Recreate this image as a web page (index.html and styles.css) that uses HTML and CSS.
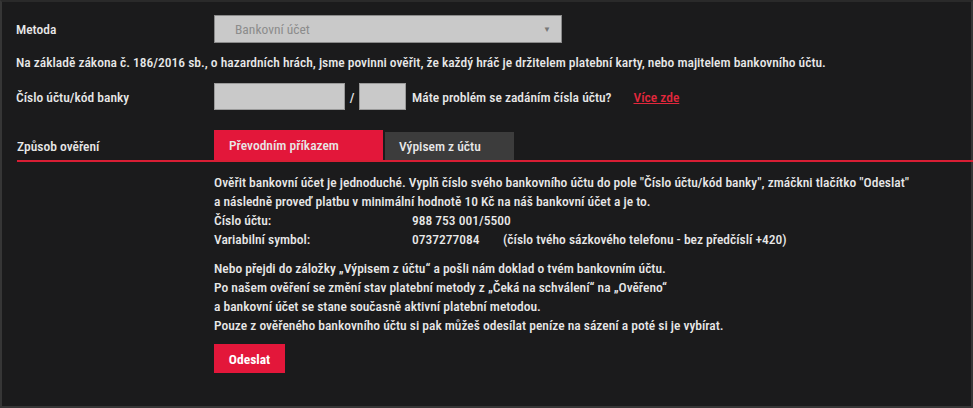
FILE: index.html
```html
<!DOCTYPE html>
<html lang="cs">

<head>
    <meta charset="UTF-8">
    <meta name="viewport" content="width=device-width, initial-scale=1.0">
    <title>Platební metoda</title>
    <link rel="stylesheet" href="styles.css">
</head>

<body>
    <div class="panel">

        <div class="row row-method">
            <label class="label" for="method">Metoda</label>
            <div class="select">
                <span>Bankovní účet</span>
                <span class="arrow">&#9660;</span>
            </div>
        </div>

        <p class="law">Na základě zákona č. 186/2016 sb., o hazardních hrách, jsme povinni ověřit, že každý hráč je držitelem platební karty, nebo majitelem bankovního účtu.</p>

        <div class="row row-account">
            <label class="label" for="account">Číslo účtu/kód banky</label>
            <input type="text" id="account" class="input input-account">
            <span class="slash">/</span>
            <input type="text" id="bank" class="input input-bank">
            <span class="help">Máte problém se zadáním čísla účtu?</span>
            <a href="#" class="more">Více zde</a>
        </div>

        <div class="tabs-row">
            <span class="label">Způsob ověření</span>
            <div class="tab active">Převodním příkazem</div>
            <div class="tab">Výpisem z účtu</div>
        </div>

        <div class="content">
            <p>Ověřit bankovní účet je jednoduché. Vyplň číslo svého bankovního účtu do pole "Číslo účtu/kód banky", zmáčkni tlačítko "Odeslat"<br>
                a následně proveď platbu v minimální hodnotě 10 Kč na náš bankovní účet a je to.</p>
            <div class="info">
                <span class="info-key">Číslo účtu:</span>
                <span>988 753 001/5500</span>
            </div>
            <div class="info">
                <span class="info-key">Variabilní symbol:</span>
                <span class="vs">0737277084</span>
                <span>(číslo tvého sázkového telefonu - bez předčíslí +420)</span>
            </div>

            <p class="second">Nebo přejdi do záložky „Výpisem z účtu“ a pošli nám doklad o tvém bankovním účtu.<br>
                Po našem ověření se změní stav platební metody z „Čeká na schválení“ na „Ověřeno“<br>
                a bankovní účet se stane současně aktivní platební metodou.<br>
                Pouze z ověřeného bankovního účtu si pak můžeš odesílat peníze na sázení a poté si je vybírat.</p>

            <button type="submit" class="btn">Odeslat</button>
        </div>

    </div>
</body>

</html>
```

FILE: styles.css
```css
body {
    margin: 0;
    background-color: #1b1b1c;
    font-family: Roboto, "Liberation Sans", sans-serif;
    font-stretch: 75%;
    font-size: 13.5px;
    font-weight: 500;
    color: #e8e8e8;
}

.panel {
    height: 408px;
    box-sizing: border-box;
    border: 2px solid #363636;
    border-top-color: #2a2a2a;
    padding: 13px 0 0 14px;
}

p {
    margin: 0;
}

.row {
    display: flex;
    align-items: center;
}

.label {
    width: 198px;
    flex-shrink: 0;
}

.select {
    width: 348px;
    height: 28px;
    box-sizing: border-box;
    border: 1px solid #8a8a8a;
    background-color: #c9c9c9;
    color: #8c8c8c;
    font-weight: 400;
    display: flex;
    align-items: center;
    justify-content: space-between;
    padding: 0 10px 0 20px;
}

.arrow {
    font-size: 8px;
    color: #777;
}

.law {
    margin: 10px 0 0 0;
    line-height: 18px;
}

.row-account {
    margin-top: 12px;
}

.input {
    height: 27px;
    box-sizing: border-box;
    border: 1px solid #9a9a9a;
    background-color: #c9c9c9;
    margin: 0;
}

.input-account {
    width: 131px;
}

.slash {
    width: 14px;
    text-align: center;
}

.input-bank {
    width: 47px;
}

.help {
    margin-left: 6px;
}

.more {
    margin-left: 22px;
    color: #e3283c;
}

.tabs-row {
    margin: 20px -2px 0 1px;
    display: flex;
    align-items: flex-end;
    border-bottom: 2px solid #d81e34;
}

.tabs-row .label {
    width: 197px;
    padding-bottom: 6px;
}

.tab {
    width: 129px;
    box-sizing: border-box;
    height: 28px;
    line-height: 28px;
    padding: 0 14px;
    background-color: #3c3c3c;
}

.tab.active {
    height: 30px;
    line-height: 30px;
    width: 169px;
    padding: 0 15px;
    margin-right: 2px;
    background-color: #e3173a;
}

.content {
    padding: 11px 0 0 198px;
    line-height: 19px;
}

.info {
    display: flex;
}

.info-key {
    width: 198px;
}

.vs {
    width: 91px;
}

.second {
    margin-top: 10px;
}

.btn {
    margin-top: 9px;
    width: 71px;
    height: 29px;
    border: none;
    background-color: #e3173a;
    color: #fff;
    font-family: inherit;
    font-stretch: inherit;
    font-weight: 700;
    font-size: 13.5px;
    cursor: pointer;
}
```
